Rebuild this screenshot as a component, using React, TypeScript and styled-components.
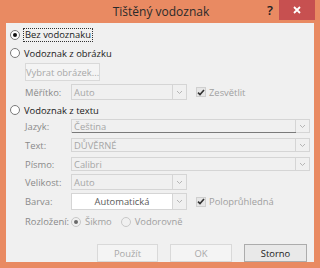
import React from "react";
import styled, { createGlobalStyle } from "styled-components";

const Global = createGlobalStyle`
  html, body { margin: 0; padding: 0; background: #e98a62; }
  body { font-family: "Open Sans", "Noto Sans", sans-serif; }
`;

const Window = styled.div`
  width: 320px;
  height: 268px;
  background: #e98a62;
  display: flex;
  flex-direction: column;
  box-sizing: border-box;
  padding: 0 6px 6px 6px;
`;

const TitleBar = styled.div`
  height: 23px;
  position: relative;
  display: flex;
  align-items: center;
  justify-content: center;
  font-size: 12px;
  color: #2a2a2a;
`;

const TitleText = styled.span`
  margin-left: 2px;
  margin-top: -1px;
`;

const Help = styled.span`
  position: absolute;
  right: 41px;
  top: 1px;
  font-size: 13px;
  font-weight: 600;
  color: #222;
`;

const Close = styled.div`
  position: absolute;
  right: -1px;
  top: 0;
  width: 36px;
  height: 20px;
  background: #c75050;
  color: #fff;
  display: flex;
  align-items: center;
  justify-content: center;
`;

const Client = styled.div`
  flex: 1;
  background: #f0f0f0;
  display: flex;
  flex-direction: column;
  padding: 7px 0 0 4px;
  font-size: 9.4px;
  color: #1a1a1a;
`;

const RadioRow = styled.div<{ $mt?: number }>`
  display: flex;
  align-items: center;
  gap: 4px;
  height: 10px;
  margin-top: ${(p) => p.$mt ?? 0}px;
`;

const RadioCircle = styled.span<{ $checked?: boolean; $disabled?: boolean }>`
  width: 10px;
  height: 10px;
  box-sizing: border-box;
  border-radius: 50%;
  border: 1px solid ${(p) => (p.$disabled ? "#c8c8c8" : "#7a7a7a")};
  background: ${(p) => (p.$disabled ? "#f0f0f0" : "#fff")};
  display: flex;
  align-items: center;
  justify-content: center;
  flex: none;
  &::after {
    content: "";
    display: ${(p) => (p.$checked ? "block" : "none")};
    width: 4px;
    height: 4px;
    border-radius: 50%;
    background: ${(p) => (p.$disabled ? "#6a6a6a" : "#111")};
  }
`;

const Focused = styled.span`
  outline: 1px dotted #333;
  outline-offset: 0px;
  padding: 0 1px;
  line-height: 12px;
`;

const Label = styled.span<{ $disabled?: boolean }>`
  color: ${(p) => (p.$disabled ? "#a0a0a0" : "#1a1a1a")};
  white-space: nowrap;
`;

const Indent = styled.div`
  padding-left: 15px;
  display: flex;
  flex-direction: column;
`;

const PlainButton = styled.div<{ $w: number; $disabled?: boolean }>`
  width: ${(p) => p.$w}px;
  height: 18px;
  box-sizing: border-box;
  border: 1px solid ${(p) => (p.$disabled ? "#d9d9d9" : "#acacac")};
  background: ${(p) => (p.$disabled ? "#f4f4f4" : "#e9e9e9")};
  color: ${(p) => (p.$disabled ? "#a8a8a8" : "#1a1a1a")};
  display: flex;
  align-items: center;
  justify-content: center;
  flex: none;
  white-space: nowrap;
`;

const FieldRow = styled.div<{ $mt: number }>`
  display: flex;
  align-items: center;
  margin-top: ${(p) => p.$mt}px;
`;

const FieldLabel = styled.span`
  width: 46px;
  flex: none;
  color: #8a8a8a;
  white-space: nowrap;
`;

const Select = styled.div<{ $w: number; $h: number; $white?: boolean; $underline?: boolean }>`
  width: ${(p) => p.$w}px;
  height: ${(p) => p.$h}px;
  box-sizing: border-box;
  border: 1px solid #d5d5d5;
  background: ${(p) => (p.$white ? "#fff" : "#f0f0f0")};
  display: flex;
  align-items: stretch;
  flex: none;
  position: relative;
  ${(p) =>
    p.$underline
      ? `&::after{content:"";position:absolute;left:0;right:13px;bottom:-1px;height:1px;background:#7a7a7a;}`
      : ""}
`;

const SelectText = styled.span<{ $center?: boolean; $dark?: boolean }>`
  flex: 1;
  display: flex;
  align-items: center;
  justify-content: ${(p) => (p.$center ? "center" : "flex-start")};
  padding-left: ${(p) => (p.$center ? 0 : 2)}px;
  color: ${(p) => (p.$dark ? "#5a5a5a" : "#a6a6a6")};
  white-space: nowrap;
`;

const Arrow = styled.span`
  width: 13px;
  border-left: 1px solid #d5d5d5;
  display: flex;
  align-items: center;
  justify-content: center;
  background: #f0f0f0;
`;

const Check = styled.span`
  width: 10px;
  height: 10px;
  box-sizing: border-box;
  border: 1px solid #cfcfcf;
  background: #e6e6e6;
  display: flex;
  align-items: center;
  justify-content: center;
  margin-left: 9px;
  margin-right: 3px;
  flex: none;
`;

const Footer = styled.div`
  display: flex;
  justify-content: flex-end;
  gap: 12px;
  padding-right: 7px;
  margin-top: 16px;
`;

const Chevron = () => (
  <svg width="7" height="5" viewBox="0 0 7 5">
    <path d="M1 1 L3.5 3.5 L6 1" fill="none" stroke="#b5b5b5" strokeWidth="1" />
  </svg>
);

const Tick = () => (
  <svg width="8" height="7" viewBox="0 0 8 7">
    <path d="M1 3.6 L3 5.6 L7 1" fill="none" stroke="#333" strokeWidth="1.6" />
  </svg>
);

const SelectBox: React.FC<{
  w: number;
  h: number;
  text: string;
  white?: boolean;
  center?: boolean;
  dark?: boolean;
  underline?: boolean;
}> = ({ w, h, text, white, center, dark, underline }) => (
  <Select $w={w} $h={h} $white={white} $underline={underline}>
    <SelectText $center={center} $dark={dark}>{text}</SelectText>
    <Arrow>
      <Chevron />
    </Arrow>
  </Select>
);

export default function App() {
  return (
    <>
      <Global />
      <Window>
        <TitleBar>
          <TitleText>Tištěný vodoznak</TitleText>
          <Help>?</Help>
          <Close>
            <svg width="8" height="8" viewBox="0 0 8 8">
              <path d="M1 1 L7 7 M7 1 L1 7" stroke="#fff" strokeWidth="1.8" />
            </svg>
          </Close>
        </TitleBar>
        <Client>
          <RadioRow $mt={0}>
            <RadioCircle $checked />
            <Focused>Bez vodoznaku</Focused>
          </RadioRow>
          <RadioRow $mt={8}>
            <RadioCircle />
            <Label>Vodoznak z obrázku</Label>
          </RadioRow>
          <Indent>
            <FieldRow $mt={5}>
              <PlainButton $w={75} $disabled>Vybrat obrázek...</PlainButton>
            </FieldRow>
            <FieldRow $mt={3}>
              <FieldLabel>Měřítko:</FieldLabel>
              <SelectBox w={116} h={16} text="Auto" />
              <Check>
                <Tick />
              </Check>
              <Label $disabled>Zesvětlit</Label>
            </FieldRow>
          </Indent>
          <RadioRow $mt={5}>
            <RadioCircle />
            <Label>Vodoznak z textu</Label>
          </RadioRow>
          <Indent>
            <FieldRow $mt={4}>
              <FieldLabel>Jazyk:</FieldLabel>
              <SelectBox w={239} h={14} text="Čeština" underline />
            </FieldRow>
            <FieldRow $mt={5}>
              <FieldLabel>Text:</FieldLabel>
              <SelectBox w={239} h={14} text="DŮVĚRNÉ" />
            </FieldRow>
            <FieldRow $mt={5}>
              <FieldLabel>Písmo:</FieldLabel>
              <SelectBox w={239} h={14} text="Calibri" />
            </FieldRow>
            <FieldRow $mt={3}>
              <FieldLabel>Velikost:</FieldLabel>
              <SelectBox w={116} h={16} text="Auto" />
            </FieldRow>
            <FieldRow $mt={3}>
              <FieldLabel>Barva:</FieldLabel>
              <SelectBox w={116} h={17} text="Automatická" white center dark />
              <Check>
                <Tick />
              </Check>
              <Label $disabled>Poloprůhledná</Label>
            </FieldRow>
            <FieldRow $mt={5}>
              <FieldLabel>Rozložení:</FieldLabel>
              <RadioRow>
                <RadioCircle $checked $disabled />
                <Label $disabled>Šikmo</Label>
              </RadioRow>
              <RadioRow style={{ marginLeft: 9 }}>
                <RadioCircle $disabled />
                <Label $disabled>Vodorovně</Label>
              </RadioRow>
            </FieldRow>
          </Indent>
          <Footer>
            <PlainButton $w={61} $disabled>Použít</PlainButton>
            <PlainButton $w={62} $disabled>OK</PlainButton>
            <PlainButton $w={63}>Storno</PlainButton>
          </Footer>
        </Client>
      </Window>
    </>
  );
}
